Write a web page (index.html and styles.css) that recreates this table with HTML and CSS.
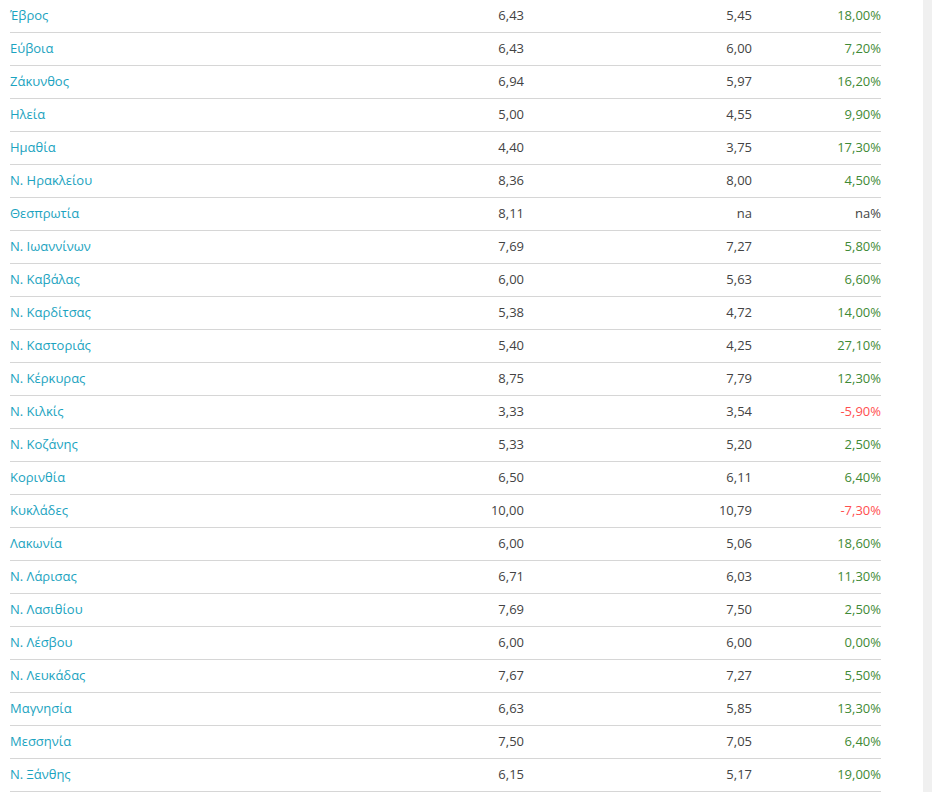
FILE: index.html
```html
<!DOCTYPE html>
<html lang="el">
<head>
    <meta charset="UTF-8">
    <meta name="viewport" content="width=device-width, initial-scale=1.0">
    <title>Νομοί</title>
    <link rel="stylesheet" href="styles.css">
</head>
<body>
    <div class="page">
        <table class="stats">
            <colgroup>
                <col class="col-name">
                <col class="col-a">
                <col class="col-b">
                <col class="col-c">
            </colgroup>
            <tbody>
                <tr><td class="name">Έβρος</td><td>6,43</td><td>5,45</td><td class="up">18,00%</td></tr>
                <tr><td class="name">Εύβοια</td><td>6,43</td><td>6,00</td><td class="up">7,20%</td></tr>
                <tr><td class="name">Ζάκυνθος</td><td>6,94</td><td>5,97</td><td class="up">16,20%</td></tr>
                <tr><td class="name">Ηλεία</td><td>5,00</td><td>4,55</td><td class="up">9,90%</td></tr>
                <tr><td class="name">Ημαθία</td><td>4,40</td><td>3,75</td><td class="up">17,30%</td></tr>
                <tr><td class="name">Ν. Ηρακλείου</td><td>8,36</td><td>8,00</td><td class="up">4,50%</td></tr>
                <tr><td class="name">Θεσπρωτία</td><td>8,11</td><td>na</td><td>na%</td></tr>
                <tr><td class="name">Ν. Ιωαννίνων</td><td>7,69</td><td>7,27</td><td class="up">5,80%</td></tr>
                <tr><td class="name">Ν. Καβάλας</td><td>6,00</td><td>5,63</td><td class="up">6,60%</td></tr>
                <tr><td class="name">Ν. Καρδίτσας</td><td>5,38</td><td>4,72</td><td class="up">14,00%</td></tr>
                <tr><td class="name">Ν. Καστοριάς</td><td>5,40</td><td>4,25</td><td class="up">27,10%</td></tr>
                <tr><td class="name">Ν. Κέρκυρας</td><td>8,75</td><td>7,79</td><td class="up">12,30%</td></tr>
                <tr><td class="name">Ν. Κιλκίς</td><td>3,33</td><td>3,54</td><td class="down">-5,90%</td></tr>
                <tr><td class="name">Ν. Κοζάνης</td><td>5,33</td><td>5,20</td><td class="up">2,50%</td></tr>
                <tr><td class="name">Κορινθία</td><td>6,50</td><td>6,11</td><td class="up">6,40%</td></tr>
                <tr><td class="name">Κυκλάδες</td><td>10,00</td><td>10,79</td><td class="down">-7,30%</td></tr>
                <tr><td class="name">Λακωνία</td><td>6,00</td><td>5,06</td><td class="up">18,60%</td></tr>
                <tr><td class="name">Ν. Λάρισας</td><td>6,71</td><td>6,03</td><td class="up">11,30%</td></tr>
                <tr><td class="name">Ν. Λασιθίου</td><td>7,69</td><td>7,50</td><td class="up">2,50%</td></tr>
                <tr><td class="name">Ν. Λέσβου</td><td>6,00</td><td>6,00</td><td class="up">0,00%</td></tr>
                <tr><td class="name">Ν. Λευκάδας</td><td>7,67</td><td>7,27</td><td class="up">5,50%</td></tr>
                <tr><td class="name">Μαγνησία</td><td>6,63</td><td>5,85</td><td class="up">13,30%</td></tr>
                <tr><td class="name">Μεσσηνία</td><td>7,50</td><td>7,05</td><td class="up">6,40%</td></tr>
                <tr><td class="name">Ν. Ξάνθης</td><td>6,15</td><td>5,17</td><td class="up">19,00%</td></tr>
            </tbody>
        </table>
    </div>
</body>
</html>
```

FILE: styles.css
```css
/* General styling */
body {
    font-family: "Open Sans", Arial, sans-serif;
    background-color: #f0f0f0;
    color: #434343;
    margin: 0;
    padding: 0;
}
.page {
    width: 923px;
    min-height: 792px;
    background-color: #fff;
    overflow: hidden;
}
/* Table */
.stats {
    table-layout: fixed;
    border-collapse: collapse;
    width: 871px;
    margin: 0 0 0 10px;
    font-size: 13px;
}
.col-name { width: 300px; }
.col-a { width: 214px; }
.col-b { width: 228px; }
.col-c { width: 129px; }
.stats td {
    height: 30px;
    padding: 0 0 2px 0;
    text-align: right;
    border-bottom: 1px solid #d6d6d6;
    white-space: nowrap;
}
.stats td.name {
    text-align: left;
    color: #1ba3c0;
}
.stats td.up {
    color: #3f8a36;
}
.stats td.down {
    color: #ff4f4f;
}
```
